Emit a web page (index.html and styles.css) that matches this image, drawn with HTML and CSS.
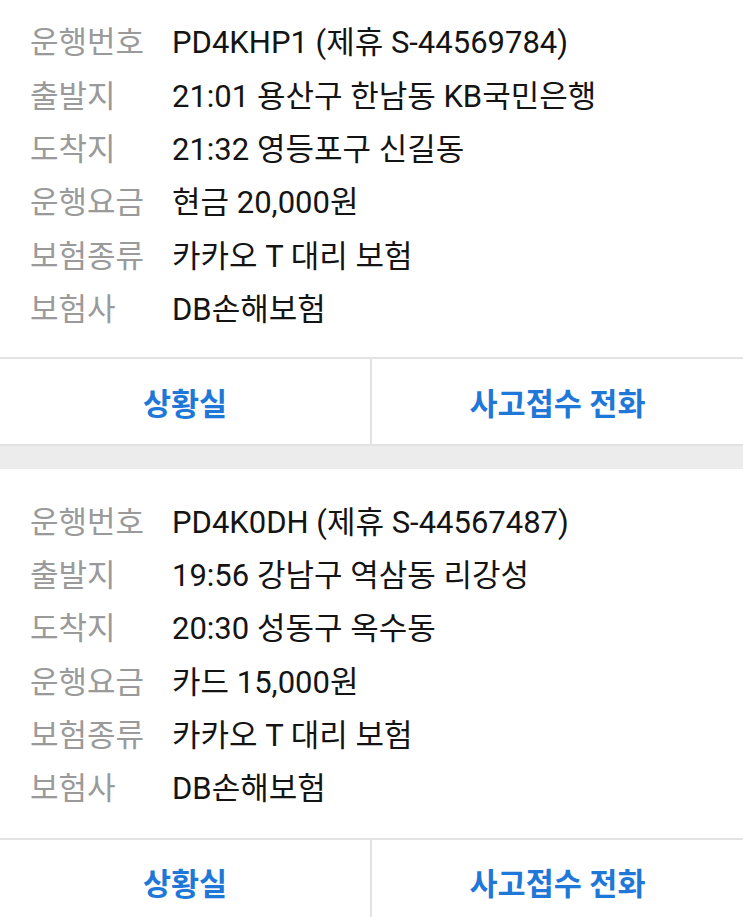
FILE: index.html
```html
<!DOCTYPE html>
<html lang="ko">
<head>
<meta charset="utf-8">
<link rel="stylesheet" href="styles.css">
</head>
<body>
<div class="card first">
  <div class="rows">
    <div class="row"><span class="label">운행번호</span><span class="value">PD4KHP1 (제휴 S-44569784)</span></div>
    <div class="row"><span class="label">출발지</span><span class="value">21:01 용산구 한남동 KB국민은행</span></div>
    <div class="row"><span class="label">도착지</span><span class="value">21:32 영등포구 신길동</span></div>
    <div class="row"><span class="label">운행요금</span><span class="value">현금 20,000원</span></div>
    <div class="row"><span class="label">보험종류</span><span class="value">카카오 T 대리 보험</span></div>
    <div class="row"><span class="label">보험사</span><span class="value">DB손해보험</span></div>
  </div>
  <div class="actions">
    <div class="btn">상황실</div>
    <div class="btn">사고접수 전화</div>
  </div>
</div>
<div class="gap"></div>
<div class="card second">
  <div class="rows">
    <div class="row"><span class="label">운행번호</span><span class="value">PD4K0DH (제휴 S-44567487)</span></div>
    <div class="row"><span class="label">출발지</span><span class="value">19:56 강남구 역삼동 리강성</span></div>
    <div class="row"><span class="label">도착지</span><span class="value">20:30 성동구 옥수동</span></div>
    <div class="row"><span class="label">운행요금</span><span class="value">카드 15,000원</span></div>
    <div class="row"><span class="label">보험종류</span><span class="value">카카오 T 대리 보험</span></div>
    <div class="row"><span class="label">보험사</span><span class="value">DB손해보험</span></div>
  </div>
  <div class="actions">
    <div class="btn">상황실</div>
    <div class="btn">사고접수 전화</div>
  </div>
</div>
</body>
</html>
```
FILE: styles.css
```css
html, body {
  margin: 0;
  padding: 0;
  background: #ffffff;
  font-family: Roboto, "Noto Sans CJK KR", sans-serif;
  overflow: hidden;
}
.card {
  background: #ffffff;
}
.rows {
  padding: 13px 30px 24px 30px;
}
.second .rows {
  padding-top: 23px;
  padding-bottom: 25px;
}
.row {
  display: flex;
  height: 53.4px;
  align-items: center;
  font-size: 31px;
}
.label {
  width: 142px;
  flex: none;
  color: #9a9a9a;
}
.value {
  color: #141414;
  white-space: nowrap;
}
.actions {
  display: grid;
  grid-template-columns: 370px 1fr;
  border-top: 2px solid #e2e2e2;
  height: 85px;
}
.btn {
  display: flex;
  align-items: center;
  justify-content: center;
  color: #1f78d8;
  font-weight: 700;
  font-size: 30.5px;
}
.btn + .btn {
  border-left: 2px solid #e2e2e2;
}
.gap {
  height: 23px;
  background: #ececec;
  border-top: 2px solid #e2e2e2;
}
```
